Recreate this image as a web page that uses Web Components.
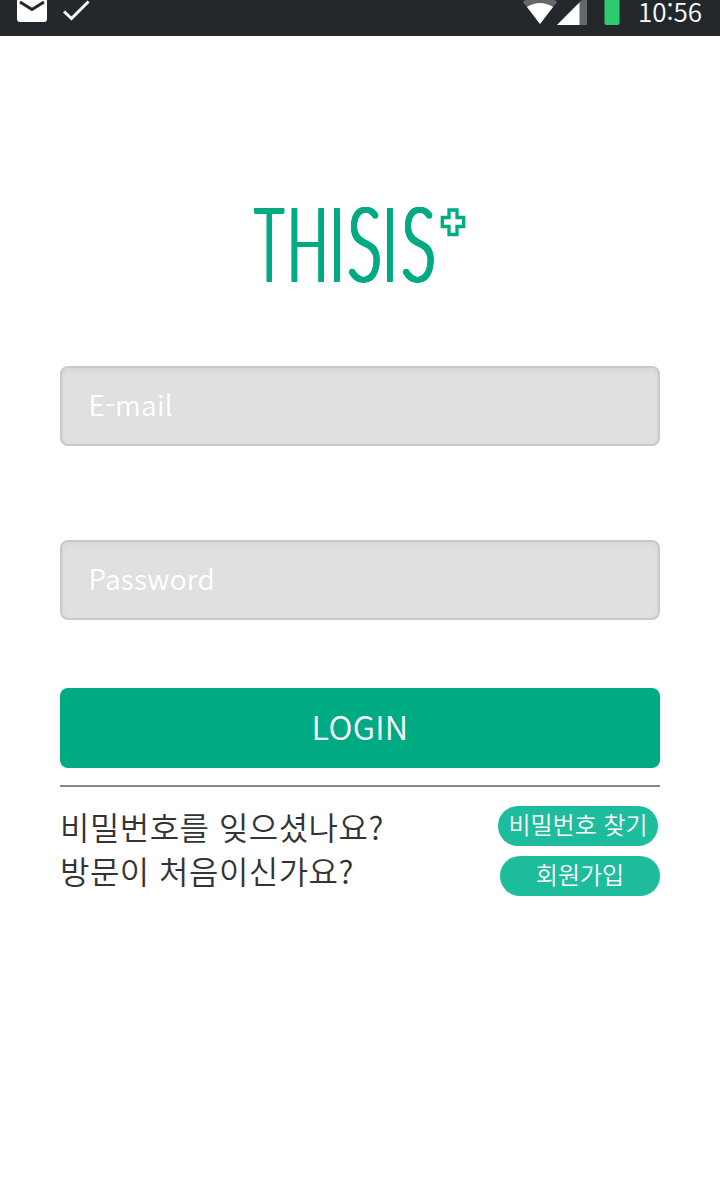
<!DOCTYPE html>
<html lang="ko"><head><meta charset="utf-8"><title>THISIS+</title>
<style>
body{margin:0;background:#fff;font-family:"Noto Sans CJK KR","Noto Sans",sans-serif;font-weight:350}
</style></head><body>
<login-screen></login-screen>
<script>
const define=(name,html)=>customElements.define(name,class extends HTMLElement{
  constructor(){super();this.attachShadow({mode:'open'}).innerHTML=html;}
});
define('status-bar',`<style>
:host{display:flex;height:36px;background:#23282c;color:#fff}
svg{display:block;flex:none}
.sp{flex:1}
span{font-size:26px;line-height:22px;height:22px;margin-right:17px;width:65px;white-space:nowrap}
</style>
<svg width="110" height="36"><path d="M17 0H47V19Q47 22 44 22H20Q17 22 17 19Z" fill="#fff"/><path d="M20 2L32 9.500L44 2" fill="none" stroke="#23282c" stroke-width="3"/><path d="M64 11.500L71.500 18.500L88.500 1.500" fill="none" stroke="#fff" stroke-width="3"/></svg>
<div class="sp"></div>
<svg width="117" height="36" viewBox="521 0 117 36"><path d="M523 2L525 0H555L557 2L540 24Z" fill="#65686b"/><path d="M527 7Q540-1 553 7L540 24Z" fill="#fff"/><path d="M579.500 2L582 0H587V25H557Z" fill="#65686b"/><path d="M579.500 2.500V25H557Z" fill="#fff"/><path d="M604.500 0H619.500V23Q619.500 25 617.500 25H606.500Q604.500 25 604.500 23Z" fill="#2ecc71"/></svg>
<span>10:56</span>`);
define('brand-logo',`<style>
:host{display:flex;width:214px;height:80px;color:#00ab84;align-items:flex-start}
.w{display:flex;width:187px;height:80px;flex:none;margin-top:-4px;font:300 103px/80px Lato,sans-serif;text-shadow:1px 0,2px 0,3px 0,4px 0,5px 0,0 1px,1px 1px,2px 1px,3px 1px,4px 1px,5px 1px}
.w span{display:block;flex:none;transform-origin:0 0;white-space:nowrap}
.t{width:32.500px;transform:translateX(.5px) scaleX(.485)}
.h{width:42.300px;transform:scaleX(.525)}
.i{width:18.400px;transform:scaleX(.56)}
.s{width:35.200px;transform:scaleX(.62)}
svg{margin:3px 0 0;flex:none;display:block}
</style><div class="w"><span class="t">T</span><span class="h">H</span><span class="i">I</span><span class="s">S</span><span class="i">I</span><span class="s">S</span></div>
<svg width="26" height="29"><path d="M9 2H17V9.500H23.700V18.500H17V26.500H9V18.500H2.300V9.500H9Z" fill="none" stroke="#00ab84" stroke-width="3.300"/></svg>`);
define('text-field',`<style>
:host{display:flex;box-sizing:border-box;height:80px;align-items:center;padding:0 0 5px 26.500px;border:2px solid #c9c9c9;border-radius:8px;background:#e0e0e0;box-shadow:inset 0 2px 6px rgba(0,0,0,.05);color:#fff;font-size:28px;line-height:40px;letter-spacing:.28px}
</style><slot></slot>`);
define('login-button',`<style>
:host{display:flex;box-sizing:border-box;padding:0 0 4px;height:80px;align-items:center;justify-content:center;border-radius:8px;background:#00ab84;color:#fff;font-size:32.500px;line-height:40px;letter-spacing:.3px}
</style><slot></slot>`);
define('pill-button',`<style>
:host{display:flex;width:160px;height:40px;align-items:center;justify-content:center;border-radius:20px;background:#1cbc9c;color:#fff;font-size:24px;line-height:36px;box-sizing:border-box;padding-bottom:4px;white-space:nowrap}
</style><slot></slot>`);
define('help-links',`<style>
:host{display:flex;justify-content:space-between;border-top:2px solid #888;color:#333}
.q{font-size:32px;line-height:44px;padding-top:17px;white-space:nowrap;letter-spacing:.46px}
.b{display:flex;flex-direction:column;gap:10px;padding-top:19px;align-items:flex-end}
.b pill-button:first-child{margin-right:2px}
</style><div class="q"><div>비밀번호를 잊으셨나요?</div><div>방문이 처음이신가요?</div></div>
<div class="b"><pill-button>비밀번호 찾기</pill-button><pill-button>회원가입</pill-button></div>`);
define('login-screen',`<style>
:host{display:block;height:1200px}
main{display:flex;flex-direction:column;padding:169px 60px 0}
brand-logo{margin-left:193px;margin-bottom:81px}
.p{margin-top:94px}
login-button{margin-top:68px}
help-links{margin-top:17px}
</style><status-bar></status-bar><main><brand-logo></brand-logo>
<text-field>E-mail</text-field><text-field class="p">Password</text-field>
<login-button>LOGIN</login-button><help-links></help-links></main>`);
</script></body></html>
